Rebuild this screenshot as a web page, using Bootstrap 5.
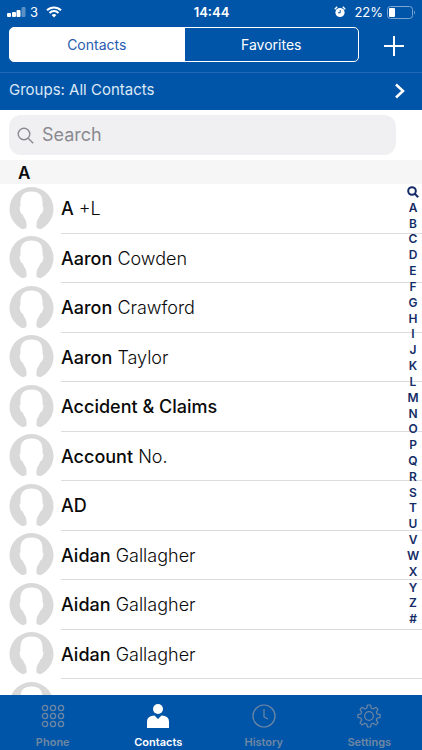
<!DOCTYPE html>
<html lang="en">
<head>
<meta charset="utf-8">
<meta name="viewport" content="width=device-width, initial-scale=1">
<title>Contacts</title>
<link rel="stylesheet" href="https://cdn.jsdelivr.net/npm/bootstrap@5.3.0/dist/css/bootstrap.min.css">
<style>
  :root { --brand: #0055a8; --index: #142c66; }
  body { font-family: Inter, "Liberation Sans", sans-serif; color: #0a0a0a; background: #fff; }
  svg { display: block; flex: none; }
  .brand-bg { background: var(--brand); color: #fff; }
  .status-bar { height: 24px; padding: 0 6px 0 7px; font-size: 13px; line-height: 24px; }
  .status-bar > div { flex: 1 1 0; }
  .status-time { font-weight: 600; }
  .switch-row { padding: 2px 17px 9px 9px; height: 48px; }
  .switch-row .btn-group { flex: 0 1 350px; }
  .switch-row .btn { flex: 1 1 0; height: 35px; padding: 0; font-size: 14px; line-height: 20px; border: 1px solid #fff; border-radius: 5px; color: #fff; }
  .switch-row .btn.active { background: #fff; color: #2a5cae; border-color: #fff; }
  .icon-btn { background: none; border: 0; padding: 2px 0 0; color: inherit; }
  .groups-row { height: 38px; padding: 0 17px 2px 9px; border-top: 1px solid #2068b4; font-size: 15px; color: #dce8f6; text-decoration: none; }
  .groups-row svg { color: #fff; }
  .search-row { padding: 5px 26px 5px 9px; }
  .search-box { height: 40px; padding: 0 8px; border-radius: 12px; background: #f0f0f3; color: #8a8a8f; }
  .search-box input { background: none; border: 0; outline: 0; padding: 0; font-size: 18px; line-height: 24px; width: 100%; color: #222; }
  .search-box input::placeholder { color: #8a8a8f; opacity: 1; }
  .contact-area { min-height: 0; flex: 1 1 0; }
  .contact-scroll { scrollbar-width: none; }
  .contact-scroll::-webkit-scrollbar { display: none; }
  .letter-head { height: 24px; padding-left: 18px; margin: 0; background: #f6f6f6; font-size: 17px; line-height: 26px; font-weight: 600; }
  .person { height: 49px; padding-left: 9px; font-size: 18px; font-weight: 300; gap: 7px; }
  .person:nth-child(odd) { height: 50px; }
  .person b { font-weight: 500; }
  .person a { border-bottom: 1px solid #dcdcde; color: inherit; text-decoration: none; }
  .index-bar { position: absolute; top: 24px; right: 0; bottom: 68px; width: 18px; font-size: 12px; line-height: 12px; font-weight: 600; }
  .index-bar a { flex: 1 1 0; color: var(--index); text-decoration: none; }
  .tab-bar { height: 55px; }
  .tab-bar a { flex: 1 1 0; color: #6f87a3; font-size: 11px; line-height: 14px; font-weight: 600; text-decoration: none; padding-top: 9px; gap: 7px; }
  .tab-bar a.active { color: #fff; }
</style>
</head>
<body>
<svg width="0" height="0" class="position-absolute" aria-hidden="true">
  <symbol id="avatar" viewBox="0 0 45 45">
    <path fill="#d9d9d9" d="M17.500 40.500C16 42.300 14 42.200 12 41.400A22 22 0 1 1 33 41.400C31 42.200 29 42.300 27.500 40.500C27.300 38 27.500 36 28 34C28.500 32.500 30.500 30.500 31.200 27.500C33 27.500 33.800 24.500 34.300 22C34.500 20.500 34.300 19.500 33.500 19.500C34.200 9.500 31.500 4.500 22.500 4.500C13.500 4.500 10.800 9.500 11.500 19.500C10.700 19.500 10.500 20.500 10.700 22C11.200 24.500 12 27.500 13.800 27.500C14.500 30.500 16.500 32.500 17 34C17.500 36 17.700 38 17.500 40.500Z"/>
  </symbol>
</svg>
<div class="d-flex flex-column vh-100 overflow-hidden">
  <header class="brand-bg flex-shrink-0">
    <div class="status-bar d-flex align-items-center">
      <div class="d-flex align-items-center gap-2">
        <div class="d-flex align-items-center gap-1">
          <svg width="19" height="11" viewBox="0 0 19 11" fill="#fff"><rect x="0" y="6" width="4" height="4" rx="1"/><rect x="5" y="5" width="4" height="5" rx="1"/><rect x="9.500" y="3" width="4" height="7" rx="1"/><rect x="14.500" y="0" width="4" height="10" rx="1" opacity=".35"/></svg>
          <span>3</span>
        </div>
        <svg width="16" height="12" viewBox="0 0 16 12" fill="none" stroke="#fff" stroke-width="2"><path d="M1 4.300a10 10 0 0 1 14 0M3.500 7a6.300 6.300 0 0 1 9 0"/><path d="M8 11.500 5.600 9.100a3.400 3.400 0 0 1 4.800 0Z" fill="#fff" stroke="none"/></svg>
      </div>
      <span class="status-time">14:44</span>
      <div class="d-flex align-items-center justify-content-end">
        <svg class="me-2" width="12" height="12" viewBox="0 0 12 12"><circle cx="6" cy="6.500" r="4.600" fill="#fff"/><path d="M.8 3.200 3.200.8M8.800.8l2.400 2.400" stroke="#fff" stroke-width="1.400"/><path d="M6.200 4v2.800H4" fill="none" stroke="#0055a8"/></svg>
        <span class="me-1">22%</span>
        <svg width="29" height="13" viewBox="0 0 29 13"><rect x=".5" y=".5" width="25" height="12" rx="3" fill="none" stroke="#79a5d3"/><rect x="2" y="2" width="6" height="9" rx="1" fill="#fff"/><path d="M27 4.500q2 2 0 4Z" fill="#79a5d3"/></svg>
      </div>
    </div>
    <div class="switch-row d-flex align-items-center justify-content-between">
      <div class="btn-group" role="group" aria-label="Contact list">
        <button type="button" class="btn active" aria-pressed="true">Contacts</button>
        <button type="button" class="btn" aria-pressed="false">Favorites</button>
      </div>
      <button type="button" class="icon-btn" aria-label="Add contact"><svg width="22" height="22" viewBox="0 0 22 22" stroke="#fff" stroke-width="2"><path d="M11 1v20M1 11h20"/></svg></button>
    </div>
    <a href="#groups" class="groups-row d-flex align-items-center justify-content-between">
      <span>Groups: All Contacts</span>
      <svg width="11" height="16" viewBox="0 0 11 16" fill="none" stroke="currentColor" stroke-width="2.500"><path d="m2 1.500 7 6.500-7 6.500"/></svg>
    </a>
  </header>
  <div class="search-row flex-shrink-0">
    <label class="search-box d-flex align-items-center gap-2">
      <svg width="17" height="17" viewBox="0 0 17 17" fill="none" stroke="currentColor" stroke-width="1.400"><circle cx="7" cy="7" r="5.800"/><path d="m11.200 11.200 5 5"/></svg>
      <input type="search" placeholder="Search" aria-label="Search">
    </label>
  </div>
  <main class="contact-area position-relative">
    <div class="contact-scroll h-100 overflow-auto">
      <h2 class="letter-head">A</h2>
      <ul class="list-unstyled m-0">
        <li class="person d-flex align-items-center"><svg width="45" height="45"><use href="#avatar"/></svg><a href="#c1" class="h-100 flex-grow-1 d-flex align-items-center"><span><b>A</b> +L</span></a></li>
        <li class="person d-flex align-items-center"><svg width="45" height="45"><use href="#avatar"/></svg><a href="#c2" class="h-100 flex-grow-1 d-flex align-items-center"><span><b>Aaron</b> Cowden</span></a></li>
        <li class="person d-flex align-items-center"><svg width="45" height="45"><use href="#avatar"/></svg><a href="#c3" class="h-100 flex-grow-1 d-flex align-items-center"><span><b>Aaron</b> Crawford</span></a></li>
        <li class="person d-flex align-items-center"><svg width="45" height="45"><use href="#avatar"/></svg><a href="#c4" class="h-100 flex-grow-1 d-flex align-items-center"><span><b>Aaron</b> Taylor</span></a></li>
        <li class="person d-flex align-items-center"><svg width="45" height="45"><use href="#avatar"/></svg><a href="#c5" class="h-100 flex-grow-1 d-flex align-items-center"><span><b>Accident &amp; Claims</b></span></a></li>
        <li class="person d-flex align-items-center"><svg width="45" height="45"><use href="#avatar"/></svg><a href="#c6" class="h-100 flex-grow-1 d-flex align-items-center"><span><b>Account</b> No.</span></a></li>
        <li class="person d-flex align-items-center"><svg width="45" height="45"><use href="#avatar"/></svg><a href="#c7" class="h-100 flex-grow-1 d-flex align-items-center"><span><b>AD</b></span></a></li>
        <li class="person d-flex align-items-center"><svg width="45" height="45"><use href="#avatar"/></svg><a href="#c8" class="h-100 flex-grow-1 d-flex align-items-center"><span><b>Aidan</b> Gallagher</span></a></li>
        <li class="person d-flex align-items-center"><svg width="45" height="45"><use href="#avatar"/></svg><a href="#c9" class="h-100 flex-grow-1 d-flex align-items-center"><span><b>Aidan</b> Gallagher</span></a></li>
        <li class="person d-flex align-items-center"><svg width="45" height="45"><use href="#avatar"/></svg><a href="#c10" class="h-100 flex-grow-1 d-flex align-items-center"><span><b>Aidan</b> Gallagher</span></a></li>
        <li class="person d-flex align-items-center"><svg width="45" height="45"><use href="#avatar"/></svg></li>
      </ul>
    </div>
    <nav class="index-bar d-flex flex-column" aria-label="Alphabet index">
      <a href="#search" class="d-flex align-items-center justify-content-center" aria-label="Search"><svg width="12" height="12" viewBox="0 0 12 12" fill="none" stroke="currentColor" stroke-width="2"><circle cx="5" cy="5" r="3.800"/><path d="m7.800 7.800 3.400 3.400"/></svg></a>
      <a href="#A" class="d-flex align-items-center justify-content-center">A</a>
      <a href="#B" class="d-flex align-items-center justify-content-center">B</a>
      <a href="#C" class="d-flex align-items-center justify-content-center">C</a>
      <a href="#D" class="d-flex align-items-center justify-content-center">D</a>
      <a href="#E" class="d-flex align-items-center justify-content-center">E</a>
      <a href="#F" class="d-flex align-items-center justify-content-center">F</a>
      <a href="#G" class="d-flex align-items-center justify-content-center">G</a>
      <a href="#H" class="d-flex align-items-center justify-content-center">H</a>
      <a href="#I" class="d-flex align-items-center justify-content-center">I</a>
      <a href="#J" class="d-flex align-items-center justify-content-center">J</a>
      <a href="#K" class="d-flex align-items-center justify-content-center">K</a>
      <a href="#L" class="d-flex align-items-center justify-content-center">L</a>
      <a href="#M" class="d-flex align-items-center justify-content-center">M</a>
      <a href="#N" class="d-flex align-items-center justify-content-center">N</a>
      <a href="#O" class="d-flex align-items-center justify-content-center">O</a>
      <a href="#P" class="d-flex align-items-center justify-content-center">P</a>
      <a href="#Q" class="d-flex align-items-center justify-content-center">Q</a>
      <a href="#R" class="d-flex align-items-center justify-content-center">R</a>
      <a href="#S" class="d-flex align-items-center justify-content-center">S</a>
      <a href="#T" class="d-flex align-items-center justify-content-center">T</a>
      <a href="#U" class="d-flex align-items-center justify-content-center">U</a>
      <a href="#V" class="d-flex align-items-center justify-content-center">V</a>
      <a href="#W" class="d-flex align-items-center justify-content-center">W</a>
      <a href="#X" class="d-flex align-items-center justify-content-center">X</a>
      <a href="#Y" class="d-flex align-items-center justify-content-center">Y</a>
      <a href="#Z" class="d-flex align-items-center justify-content-center">Z</a>
      <a href="#other" class="d-flex align-items-center justify-content-center">#</a>
    </nav>
  </main>
  <nav class="tab-bar brand-bg d-flex flex-shrink-0" aria-label="Main">
    <a href="#phone" class="d-flex flex-column align-items-center">
      <svg width="24" height="24" viewBox="0 0 24 24" fill="none" stroke="currentColor" stroke-width="1.300"><g id="dots"><circle cx="4" cy="4" r="2.600"/><circle cx="12" cy="4" r="2.600"/><circle cx="20" cy="4" r="2.600"/></g><use href="#dots" y="8"/><use href="#dots" y="16"/></svg>
      <span>Phone</span></a>
    <a href="#contacts" class="active d-flex flex-column align-items-center" aria-current="page">
      <svg width="24" height="24" viewBox="0 0 24 24" fill="currentColor"><circle cx="12" cy="5" r="5"/><path d="M1 24V17.500Q1 12 8.500 11.500L12 15l3.500-3.500Q23 12 23 17.500V24Z"/></svg>
      <span>Contacts</span></a>
    <a href="#history" class="d-flex flex-column align-items-center">
      <svg width="24" height="24" viewBox="0 0 24 24" fill="none" stroke="currentColor" stroke-width="1.200"><circle cx="12" cy="12" r="11"/><path d="M12 5v8l4 2"/></svg>
      <span>History</span></a>
    <a href="#settings" class="d-flex flex-column align-items-center">
      <svg width="24" height="24" viewBox="0 0 24 24" fill="none" stroke="currentColor" stroke-width="1.200" stroke-linejoin="round"><circle cx="12" cy="12" r="4.300"/><path d="M10.500 1h3l.8 3.200 1.900.8 2.800-1.700 2 2-1.700 2.800.8 1.900 3 .7v2.800l-3 .7-.8 1.900 1.700 2.800-2 2-2.800-1.700-1.900.8-.8 3h-3l-.8-3-1.900-.8L5 20.900l-2-2 1.700-2.800-.8-1.900-3-.7v-2.800l3-.7.8-1.900L3 5.300l2-2L7.800 5l1.900-.8Z"/></svg>
      <span>Settings</span></a>
  </nav>
</div>
<script src="https://cdn.jsdelivr.net/npm/bootstrap@5.3.0/dist/js/bootstrap.bundle.min.js"></script>
</body>
</html>
